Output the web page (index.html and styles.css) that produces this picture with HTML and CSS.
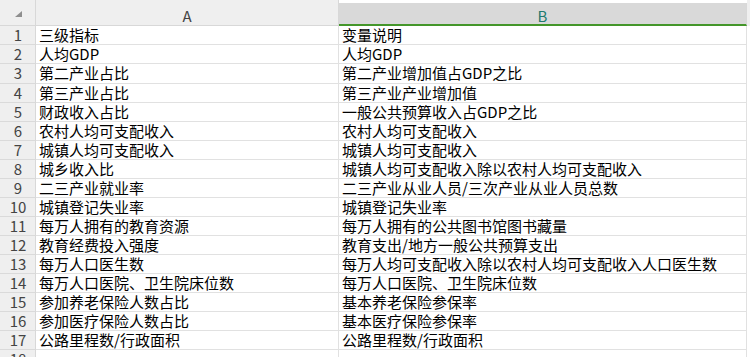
FILE: index.html
```html
<!DOCTYPE html>
<html lang="zh">
<head>
<meta charset="utf-8">
<title>Sheet</title>
<link rel="stylesheet" href="styles.css">
</head>
<body>
<div class="sheet">
  <div class="corner"><span class="tri"></span></div>
  <div class="colhead">A</div>
  <div class="colhead sel">B</div>
  <div class="colhead rest"></div>

  <div class="rn">1</div><div class="c">三级指标</div><div class="c">变量说明</div><div class="e"></div>
  <div class="rn">2</div><div class="c">人均GDP</div><div class="c">人均GDP</div><div class="e"></div>
  <div class="rn">3</div><div class="c">第二产业占比</div><div class="c">第二产业增加值占GDP之比</div><div class="e"></div>
  <div class="rn">4</div><div class="c">第三产业占比</div><div class="c">第三产业产业增加值</div><div class="e"></div>
  <div class="rn">5</div><div class="c">财政收入占比</div><div class="c">一般公共预算收入占GDP之比</div><div class="e"></div>
  <div class="rn">6</div><div class="c">农村人均可支配收入</div><div class="c">农村人均可支配收入</div><div class="e"></div>
  <div class="rn">7</div><div class="c">城镇人均可支配收入</div><div class="c">城镇人均可支配收入</div><div class="e"></div>
  <div class="rn">8</div><div class="c">城乡收入比</div><div class="c">城镇人均可支配收入除以农村人均可支配收入</div><div class="e"></div>
  <div class="rn">9</div><div class="c">二三产业就业率</div><div class="c">二三产业从业人员/三次产业从业人员总数</div><div class="e"></div>
  <div class="rn">10</div><div class="c">城镇登记失业率</div><div class="c">城镇登记失业率</div><div class="e"></div>
  <div class="rn">11</div><div class="c">每万人拥有的教育资源</div><div class="c">每万人拥有的公共图书馆图书藏量</div><div class="e"></div>
  <div class="rn">12</div><div class="c">教育经费投入强度</div><div class="c">教育支出/地方一般公共预算支出</div><div class="e"></div>
  <div class="rn">13</div><div class="c">每万人口医生数</div><div class="c">每万人均可支配收入除以农村人均可支配收入人口医生数</div><div class="e"></div>
  <div class="rn">14</div><div class="c">每万人口医院、卫生院床位数</div><div class="c">每万人口医院、卫生院床位数</div><div class="e"></div>
  <div class="rn">15</div><div class="c">参加养老保险人数占比</div><div class="c">基本养老保险参保率</div><div class="e"></div>
  <div class="rn">16</div><div class="c">参加医疗保险人数占比</div><div class="c">基本医疗保险参保率</div><div class="e"></div>
  <div class="rn">17</div><div class="c">公路里程数/行政面积</div><div class="c">公路里程数/行政面积</div><div class="e"></div>
  <div class="rn">18</div><div class="c"></div><div class="c"></div><div class="e"></div>
</div>
</body>
</html>
```
FILE: styles.css
```css
html, body {
  margin: 0;
  padding: 0;
  background: #ffffff;
  overflow: hidden;
}

.sheet {
  display: grid;
  grid-template-columns: 36px 303px 408px 3px;
  grid-template-rows: 26px 19px 19px 20px repeat(14, 19px) 19px;
  font-family: "Noto Sans CJK SC", "Microsoft YaHei", sans-serif;
  font-size: 15px;
  color: #000;
  width: 750px;
}

.corner {
  background: #efefef;
  border-right: 1px solid #d8d8d8;
  border-bottom: 1px solid #d8d8d8;
  position: relative;
}

.tri {
  position: absolute;
  left: 15px;
  top: 11px;
  width: 0;
  height: 0;
  border-left: 7px solid transparent;
  border-bottom: 6px solid #8e8e8e;
}

.colhead {
  background: #efefef;
  border-right: 1px solid #d8d8d8;
  border-bottom: 1px solid #d8d8d8;
  text-align: center;
  color: #444;
  line-height: 18px;
  padding-top: 7px;
  box-sizing: border-box;
}

.colhead.sel {
  margin-top: 3px;
  padding-top: 4px;
  background: #d9d9d9;
  border-bottom: 2px solid #44962a;
  color: #217a6e;
}

.colhead.rest {
  border-right: none;
  border-bottom: none;
}

.rn {
  background: #efefef;
  border-right: 1px solid #d8d8d8;
  border-bottom: 1px solid #dadada;
  text-align: center;
  color: #444;
  line-height: 18px;
  padding-left: 1px;
}

.c {
  border-right: 1px solid #e1e1e1;
  border-bottom: 1px solid #e1e1e1;
  padding-left: 3px;
  line-height: 18px;
  white-space: nowrap;
}

.e {
  background: #ffffff;
}
```
